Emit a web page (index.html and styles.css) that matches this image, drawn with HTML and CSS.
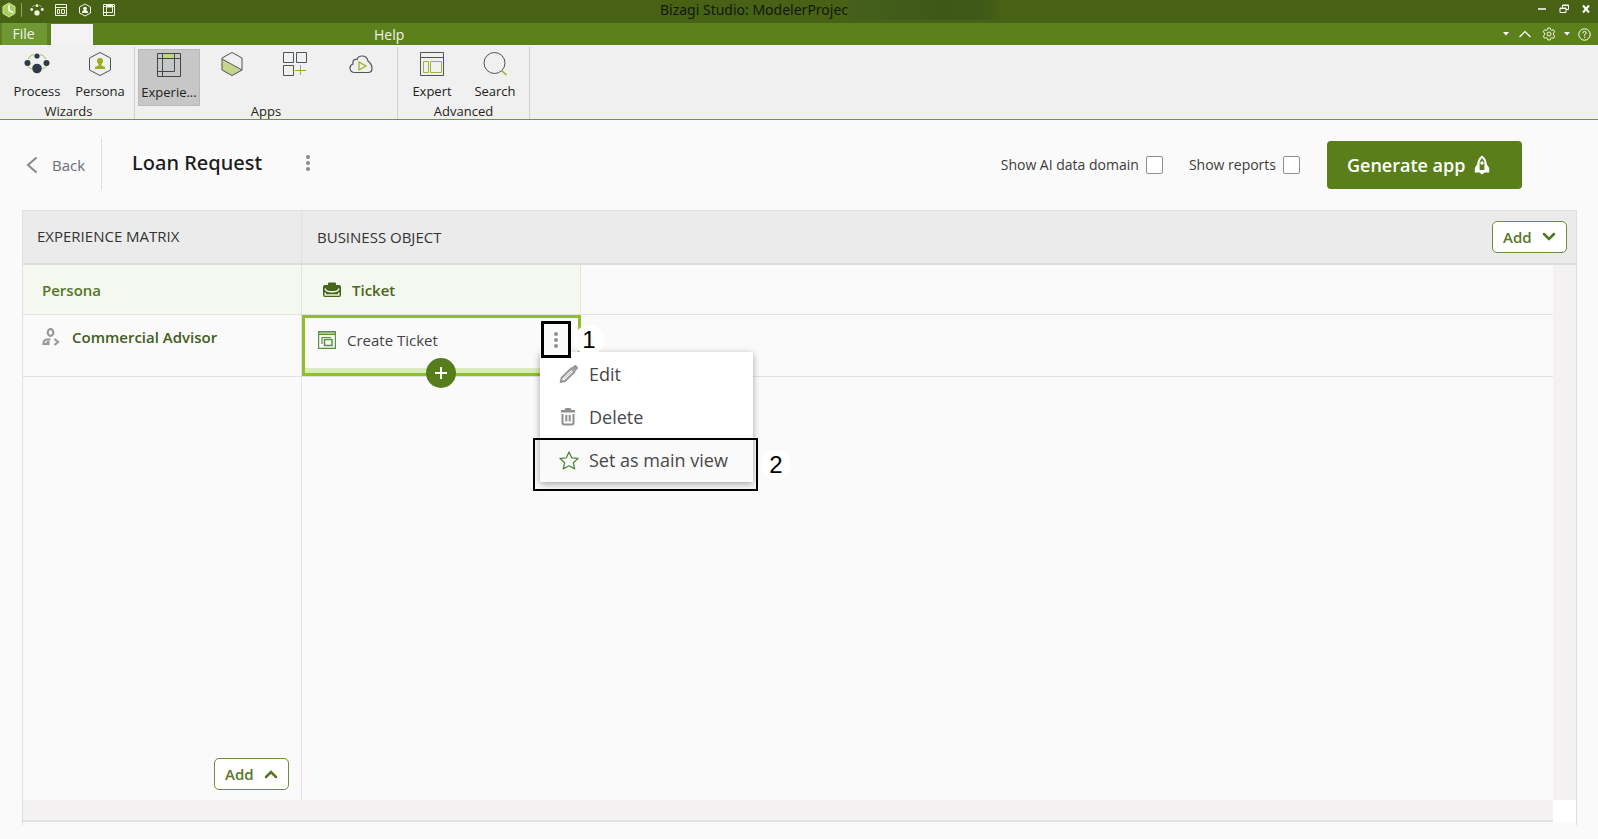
FILE: index.html
```html
<!DOCTYPE html>
<html lang="en">
<head>
<meta charset="utf-8">
<title>Bizagi Studio</title>
<link rel="stylesheet" href="styles.css">
</head>
<body>
<header class="titlebar">
  <div class="quick">
    <svg class="logo" width="14" height="16" viewBox="0 0 14 16"><path d="M7 1l6 3.500v7L7 15l-6-3.500v-7z" fill="#a8cf5a" stroke="#cfe6a0"/><path d="M7 3v5.500l4 2" fill="none" stroke="#fff" stroke-width="1.500"/></svg>
    <span class="quick-sep"></span>
    <button aria-label="Process"><svg width="14" height="14" viewBox="0 0 24 22"><g fill="#eef5e0"><circle cx="12" cy="3.500" r="2.500"/><circle cx="3" cy="10" r="2.500"/><circle cx="21" cy="10" r="2.500"/><circle cx="12" cy="16" r="4.500"/></g><path d="M4 6q2-3 4-3M20 6q-2-3-4-3" fill="none" stroke="#eef5e0"/></svg></button>
    <button aria-label="Expert"><svg width="14" height="14" viewBox="0 0 14 14" fill="none" stroke="#eef5e0"><path d="M1.500 1.500h11v11h-11zM1.500 4.500h11M3.500 6.500h2v4h-2zM7.500 6.500h3v4h-3z"/></svg></button>
    <button aria-label="Persona"><svg width="14" height="14" viewBox="0 0 14 14"><path d="M7 1l5.500 3v6L7 13l-5.500-3V4z" fill="none" stroke="#eef5e0"/><circle cx="7" cy="5.500" r="1.800" fill="#fff"/><path d="M4 10q0-3 3-3t3 3z" fill="#fff"/></svg></button>
    <button aria-label="Experience"><svg width="14" height="14" viewBox="0 0 14 14" fill="none" stroke="#eef5e0"><path d="M1.500 1.500h11v11h-11zM4.500 1v12M10.500 1v8.500H1.500M1.500 3.500h11"/><path d="M5 2h5v2H5z" fill="#fff"/></svg></button>
  </div>
  <div class="app-title">Bizagi Studio: ModelerProjec</div>
  <div class="window-controls">
    <button aria-label="Minimize"><svg width="10" height="10" viewBox="0 0 10 10"><path d="M1 5h8" stroke="#fff" stroke-width="1.500"/></svg></button>
    <button aria-label="Restore"><svg width="10" height="10" viewBox="0 0 10 10" fill="none" stroke="#fff"><path d="M1 4h6v4.500H1zM1 4.500h6M3.500 3.500v-2.500h6v4.500H7M3.500 1.500h6"/></svg></button>
    <button aria-label="Close"><svg width="10" height="10" viewBox="0 0 10 10"><path d="M2 1.500l6 7M8 1.500l-6 7" stroke="#fff" stroke-width="2"/></svg></button>
  </div>
</header>
<nav class="tabs">
  <button class="file-tab">File</button>
  <button class="active-tab" aria-label="Current tab"></button>
  <button class="help-tab">Help</button>
  <div class="tab-tools">
    <button class="caret" aria-label="More"><svg width="6" height="4"><path d="M0 0h6l-3 3.500z" fill="#fff"/></svg></button>
    <button aria-label="Collapse ribbon"><svg width="14" height="8" viewBox="0 0 14 8"><path d="M1.500 7l5.500-5.500 5.500 5.500" fill="none" stroke="#fff" stroke-width="1.200"/></svg></button>
    <button class="gear" aria-label="Settings"><svg width="14" height="14" viewBox="0 0 14 14" fill="none" stroke="#f2f7e8"><path d="M5.800 1h2.400l.4 1.700 1.200.6 1.700-.5 1.200 2-1.200 1.300v1.800l1.200 1.300-1.200 2-1.700-.5-1.200.6-.4 1.700H5.800l-.4-1.700-1.200-.6-1.700.5-1.200-2 1.200-1.300V6.100L1.300 4.800l1.200-2 1.700.5 1.200-.6z"/><circle cx="7" cy="7" r="2"/></svg></button>
    <button aria-label="Settings menu"><svg width="6" height="4"><path d="M0 0h6l-3 3.500z" fill="#fff"/></svg></button>
    <button class="help-btn" aria-label="Help"><svg width="13" height="13" viewBox="0 0 13 13" fill="none" stroke="#fff"><circle cx="6.500" cy="6.500" r="5.700"/><path d="M4.800 5.200q0-1.800 1.700-1.800t1.700 1.600q0 .9-1.600 1.700v1M6.600 8.700v1.200"/></svg></button>
  </div>
</nav>
<section class="ribbon">
  <div class="group">
    <div class="tools">
      <button class="tool"><svg width="26" height="26" viewBox="0 0 26 26"><path d="M4 8q2-4 6-4.500M22 8q-2-4-6-4.500M3 14q1 3 5 4M23 14q-1 3-5 4" fill="none" stroke="#a9c34a"/><g fill="#2f3a47"><circle cx="13" cy="5" r="2.600"/><circle cx="3.500" cy="12" r="3"/><circle cx="22.500" cy="12" r="3"/><circle cx="13" cy="17.500" r="4.800"/></g></svg><span>Process</span></button>
      <button class="tool"><svg width="26" height="26" viewBox="0 0 26 26"><path d="M13 1.500l10.500 5.500v12L13 24.500 2.500 19V7z" fill="none" stroke="#4c545c"/><circle cx="13" cy="10" r="3" fill="#9aae1c"/><path d="M11.500 12h3v2.500l3.500 1.500v2H8v-2l3.500-1.500z" fill="#9aae1c"/></svg><span>Persona</span></button>
    </div>
    <div class="group-name">Wizards</div>
  </div>
  <div class="group apps">
    <div class="tools">
      <button class="tool selected" title="Experience"><svg width="26" height="26" viewBox="0 0 26 26" fill="none" stroke="#3f474d"><path d="M7 2h12v4H7z" fill="#c3d67a" stroke="none"/><path d="M1.500 1.500h23v23h-23zM6.500 1.500v23M18.500 1.500v18M1.500 6.500h23M1.500 19.500h17"/></svg><span>Experie...</span></button>
      <button class="tool" aria-label="App"><svg width="26" height="26" viewBox="0 0 26 26"><path d="M3 8l20 11.500-10 5-10-5.500z" fill="#c5d68b"/><path d="M13 1.500L23 7v12l-10 5.500L3 19V7zM3 8l20 11" fill="none" stroke="#4c545c"/></svg></button>
      <button class="tool" aria-label="Add app"><svg width="26" height="26" viewBox="0 0 26 26" fill="none" stroke="#4c545c"><path d="M1.500 1.500h10v10h-10zM14.500 1.500h10v10h-10zM1.500 14.500h10v10h-10z"/><path d="M18.500 14v10M13 19.500h11" stroke="#9aae1c"/></svg></button>
      <button class="tool cloud" aria-label="Cloud run"><svg width="26" height="26" viewBox="0 0 26 26" fill="none" stroke="#4c545c" stroke-width="1.200"><path d="M7 21.500q-5 0-5-4.500 0-3 3-4-1-5 4-4.500 1-3.500 5-3.500 5 0 6 5 4 3 4 7.500 0 4-4 4z"/><path d="M11 11l7 4-7 4z" stroke="#9aae1c"/></svg></button>
    </div>
    <div class="group-name">Apps</div>
  </div>
  <div class="group">
    <div class="tools">
      <button class="tool"><svg width="26" height="26" viewBox="0 0 26 26" fill="none" stroke="#4c545c"><path d="M1.500 1.500h23v23h-23zM1.500 6.500h23"/><path d="M4.500 10.500h5v11h-5zM11.500 10.500h11v11h-11z" stroke="#9fb52c"/></svg><span>Expert</span></button>
      <button class="tool"><svg width="26" height="26" viewBox="0 0 26 26" fill="none"><circle cx="12.500" cy="12" r="10.500" stroke="#4c545c"/><path d="M19.500 19.500l5 4.500" stroke="#9aae1c" stroke-width="1.500"/></svg><span>Search</span></button>
    </div>
    <div class="group-name">Advanced</div>
  </div>
</section>
<main class="page">
  <div class="page-head">
    <a class="back" href="#"><svg width="12" height="18" viewBox="0 0 12 18"><path d="M10.500 1.500L2 9l8.500 7.500" fill="none" stroke="#8c8c8c" stroke-width="2.200"/></svg>Back</a>
    <h1>Loan Request</h1>
    <button class="dots" aria-label="App options"><svg width="6" height="18" fill="#8a8a8a"><circle cx="3" cy="3" r="2"/><circle cx="3" cy="9" r="2"/><circle cx="3" cy="15" r="2"/></svg></button>
    <label class="check">Show AI data domain<input type="checkbox"></label>
    <label class="check">Show reports<input type="checkbox"></label>
    <button class="generate">Generate app<svg width="16" height="20" viewBox="0 0 16 20"><path d="M8 .5C4.500 3 3.300 6 3.300 9L.8 13v4.500h4.700l2.500 2 2.500-2h4.700V13L12.700 9c0-3-1.200-6-4.700-8.500z" fill="#fff"/><path d="M5.600 15V9q0-4 2.400-6 2.400 2 2.400 6v6z" fill="#5a7f1a"/><circle cx="8" cy="8" r="1.700" fill="#fff"/></svg></button>
  </div>
  <section class="matrix">
    <div class="matrix-head">
      <div class="corner-title">EXPERIENCE MATRIX</div>
      <div class="object-title">BUSINESS OBJECT</div>
      <button class="add">Add<svg width="14" height="10" viewBox="0 0 14 10"><path d="M2 2l5 5 5-5" fill="none" stroke="#4c7a1a" stroke-width="2.500" stroke-linecap="round"/></svg></button>
    </div>
    <div class="matrix-body">
      <table>
        <tr class="names"><th class="tint persona">Persona</th><th class="tint object"><div class="named"><svg width="18" height="16" viewBox="0 0 18 16"><path d="M5 3V1.500Q5 .5 6 .5h6q1 0 1 1V3h3q2 0 2 2v8q0 2-2 2H2q-2 0-2-2V5q0-2 2-2z" fill="#47641a"/><path d="M2 6.500q1 3 5 3.200h4q4-.2 5-3.200v0M2.200 10.500v2.500h13.600v-2.500" fill="none" stroke="#eef4e2" stroke-width="1.400"/></svg>Ticket</div></th><td></td></tr>
        <tr class="entry"><th class="persona-cell"><div class="named"><svg width="18" height="18" viewBox="0 0 18 18" fill="none" stroke="#979797" stroke-width="2.200"><ellipse cx="8.500" cy="4.500" rx="2.800" ry="3.300"/><path d="M8.500 11.500H4.500q-3 .5-3 4.500h6M4.500 14h3M12.500 11l3.500 3-3.500 3"/></svg>Commercial Advisor</div></th>
          <td class="card-cell"><div class="card">
            <div class="card-main"><svg width="18" height="18" viewBox="0 0 18 18" fill="none" stroke="#5a9140" stroke-width="1.200"><path d="M1 1h16v2.500H1z" fill="#a9c79a" stroke="none"/><path d="M.6 .6h16.800v16.800H.6zM.6 3.500h16.800M4 13V6.500h9"/><path d="M6.500 8.500h7.500v6H6.500z" stroke-width="1.500"/></svg>Create Ticket</div>
            <button class="plus" aria-label="Add view"><svg width="12" height="12"><path d="M6 0v12M0 6h12" stroke="#fff" stroke-width="2"/></svg></button>
            <div class="menu">
              <button><svg width="20" height="20" viewBox="0 0 20 20"><path d="M1.800 18l.9-4.300L12.200 4.500l3.300 3.300L6 17z" fill="none" stroke="#969696" stroke-width="2"/><path d="M5 14.500l7.500-7" stroke="#b5b5b5"/><path d="M13 3.500L15 1.500q1.200-1 2.300 0l1.200 1.200q1 1.200 0 2.300l-2 2z" fill="#969696"/></svg>Edit</button>
              <button><svg width="20" height="20" viewBox="0 0 20 20"><path d="M2 5.500V3h3.500l1.200-2h4.600l1.200 2H16v2.500z" fill="#8f8f8f"/><path d="M3.500 7v8.500q0 2 2 2h7q2 0 2-2V7M7.300 8v6.500M10.700 8v6.500" fill="none" stroke="#8f8f8f" stroke-width="2"/></svg>Delete</button>
              <button class="current"><svg width="20" height="19" viewBox="0 0 20 19"><path d="M10 1l2.700 5.800 6.300.6-4.700 4.300 1.400 6.200L10 14.800l-5.700 3.100 1.400-6.200L1 7.400l6.300-.6z" fill="none" stroke="#4f8a3c" stroke-width="1.300" stroke-linejoin="round"/></svg>Set as main view</button>
            </div>
            <span class="step one">1</span>
            <button class="dots card-dots" aria-label="Card options"><svg width="6" height="18" fill="#8f8f8f"><circle cx="3" cy="3" r="2"/><circle cx="3" cy="9" r="2"/><circle cx="3" cy="15" r="2"/></svg></button>
            <span class="frame"></span>
            <span class="step two">2</span>
          </div></td><td></td></tr>
        <tr class="fill"><th><button class="add">Add<svg width="14" height="10" viewBox="0 0 14 10"><path d="M2 8l5-5 5 5" fill="none" stroke="#5a7421" stroke-width="2.500" stroke-linecap="round"/></svg></button></th><td></td><td></td></tr>
      </table>
      <div class="track"></div>
      <div class="track bottom"></div>
      <div class="track-corner"></div>
    </div>
  </section>
</main>
</body>
</html>
```
FILE: styles.css
```css
* { box-sizing: border-box; }
html, body { height: 100%; }
body {
  margin: 0;
  display: flex;
  flex-direction: column;
  background: #fafafa;
  color: #333;
  font-family: "Open Sans", "Noto Sans", sans-serif;
  font-size: 15px;
}
button { border: 0; padding: 0; background: none; color: inherit; font: inherit; }
svg { display: block; flex: none; }

.titlebar {
  display: grid;
  grid-template-columns: 1fr auto 1fr;
  align-items: start;
  height: 23px;
  flex: none;
  background: #486215;
}
.quick { display: flex; align-items: center; height: 20px; }
.logo { margin-left: 2px; }
.quick-sep { width: 1px; height: 14px; margin: 0 8px 0 5px; background: #8da665; }
.quick button { margin-right: 10px; }
.app-title {
  position: relative;
  padding-right: 90px;
  color: #10180a;
  font: 14px/20px "Noto Sans", sans-serif;
}
.app-title::after {
  content: "";
  position: absolute;
  top: 0;
  right: -66px;
  width: 156px;
  height: 20px;
  background: linear-gradient(90deg, #45601a, #3e581a 60%, #3f5919 85%, #486215);
}
.window-controls { display: flex; justify-content: flex-end; gap: 12px; height: 18px; padding-right: 7px; align-items: center; }

.tabs { display: flex; align-items: flex-end; height: 22px; flex: none; padding-left: 2px; background: #5c801c; color: #f2f6ea; font-size: 14px; line-height: 20px; }
.file-tab { width: 45px; height: 22px; padding-right: 2px; background: #6f9734; }
.active-tab { width: 42px; height: 21px; margin-left: 4px; background: #f3f3f3; }
.help-tab { height: 20px; margin-left: 281px; }
.tab-tools { display: flex; align-items: center; height: 22px; margin-left: auto; padding-right: 7px; }
.caret { margin-right: 9px; }
.gear { margin: 0 8px 0 10px; }
.help-btn { margin-left: 8px; }

.ribbon { display: flex; height: 75px; flex: none; background: #f0f0f0; border-bottom: 1px solid #6f9634; color: #222; font-size: 13px; }
.group { margin-top: 2px; padding: 2px 3px 0 6px; border-right: 1px solid #d0d0d0; }
.apps, .apps + .group { padding-left: 3px; }
.tools { display: flex; gap: 1px; height: 55px; }
.tool { display: flex; flex-direction: column; align-items: center; gap: 5px; width: 62px; height: 57px; padding-top: 2px; }
.tool span { height: 18px; line-height: 18px; }
.selected { background: #c7c7c7; border: 1px solid #b9b9b9; }
.cloud { margin: 0 2px 0 3px; }
.group-name { text-align: center; line-height: 15px; }

.page { flex: 1; display: flex; flex-direction: column; padding: 0 21px 14px 22px; min-height: 0; }
.page-head { display: flex; align-items: center; height: 90px; padding: 0 55px 2px 4px; }
.back { display: flex; align-items: center; gap: 14px; height: 52px; padding: 2px 16px 0 0; border-right: 1px solid #dedede; color: #6c6c74; font-size: 15px; text-decoration: none; }
h1 { margin: 0 0 2px 30px; color: #1c1c1c; font: 500 20px/28px "Noto Sans", sans-serif; }
.dots { display: flex; align-items: center; justify-content: center; }
.page-head .dots { margin: 0 auto 2px 43px; }
.check { display: flex; align-items: center; gap: 7px; margin-right: 27px; font-size: 14px; color: #3c3c3c; }
.check + .check { margin-left: -1px; }
.check input { appearance: none; width: 17px; height: 18px; margin: 2px 0 0; background: #fff; border: 1px solid #8e8e8e; border-radius: 2px; }
.generate { display: flex; align-items: center; gap: 9px; width: 195px; height: 48px; margin-top: 1px; padding-left: 20px; background: #5a7f1a; border-radius: 4px; color: #fff; font-size: 18px; font-weight: 600; }

.matrix { flex: 1; display: flex; flex-direction: column; border: 1px solid #e0e0e0; border-bottom: 0; min-height: 0; }
.matrix-head { display: flex; align-items: center; height: 54px; flex: none; padding-right: 9px; background: #ebebeb; border-bottom: 2px solid #dedede; }
.corner-title { width: 279px; height: 51px; padding-left: 14px; line-height: 48px; border-right: 1px solid #e0e0e0; }
.object-title { flex: 1; padding-left: 15px; line-height: 48px; }
.add { display: flex; align-items: center; gap: 10px; width: 75px; height: 32px; padding-left: 10px; background: #fff; border: 1px solid #6d8c3c; border-radius: 5px; color: #58792a; font-weight: 600; }
.matrix-body { flex: 1; display: grid; grid-template: 1fr 22px / 1fr 23px; min-height: 0; margin-bottom: 3px; }
.track { background: #f3f1f2; }
.bottom { border-bottom: 2px solid #e2e2e2; }
.track-corner { background: #fff; }

table { width: 100%; height: 100%; table-layout: fixed; border-collapse: separate; border-spacing: 0; }
th, td { padding: 0; border-bottom: 1px solid #e2e2e2; text-align: left; font-weight: 600; }
th:first-child { width: 279px; border-right: 1px solid #e2e2e2; }
.names { height: 50px; }
.entry { height: 62px; }
.tint { background: #f4f8ef; color: #55762a; }
.persona { padding-left: 19px; }
.object { width: 279px; padding-left: 21px; border-right: 1px solid #e2e2e2; color: #4b6620; }
.named { display: flex; align-items: center; gap: 11px; }
.persona-cell { padding: 10px 0 0 19px; vertical-align: top; color: #415e1b; }
.persona-cell .named { gap: 12px; line-height: 24px; }
.fill th, .fill td { border-bottom: 0; vertical-align: bottom; }
.fill .add { margin: 0 0 10px 191px; }

.card { position: relative; height: 61px; border: 3px solid #8fc02a; background: #fafafa; box-shadow: inset 0 -5px #d9ebba; color: #444; font-weight: 400; }
.card-main { display: flex; align-items: center; gap: 11px; height: 43px; padding-left: 13px; }
.plus { position: absolute; left: 121px; top: 40px; display: flex; align-items: center; justify-content: center; width: 30px; height: 30px; background: #567d1b; border-radius: 50%; }
.menu { position: absolute; left: 235px; top: 34px; width: 213px; background: #fff; box-shadow: 0 2px 7px rgba(0, 0, 0, .35); }
.menu button { display: flex; align-items: center; gap: 10px; width: 100%; height: 43px; padding-left: 19px; color: #484848; font-size: 18px; }
.menu .current { height: 44px; background: #fafafa; }
.card-dots { position: absolute; left: 236px; top: 3px; width: 30px; height: 37px; border: 3px solid #000; background: #fafafa; }
.frame { position: absolute; left: 228px; top: 120px; width: 225px; height: 53px; border: 2px solid #000; }
.step { position: absolute; width: 30px; height: 30px; border-radius: 15px; background: #fff; color: #000; font: 24px/30px "Liberation Sans", Arial, sans-serif; text-align: center; }
.one { left: 269px; top: 7px; }
.two { left: 456px; top: 132px; }
```
